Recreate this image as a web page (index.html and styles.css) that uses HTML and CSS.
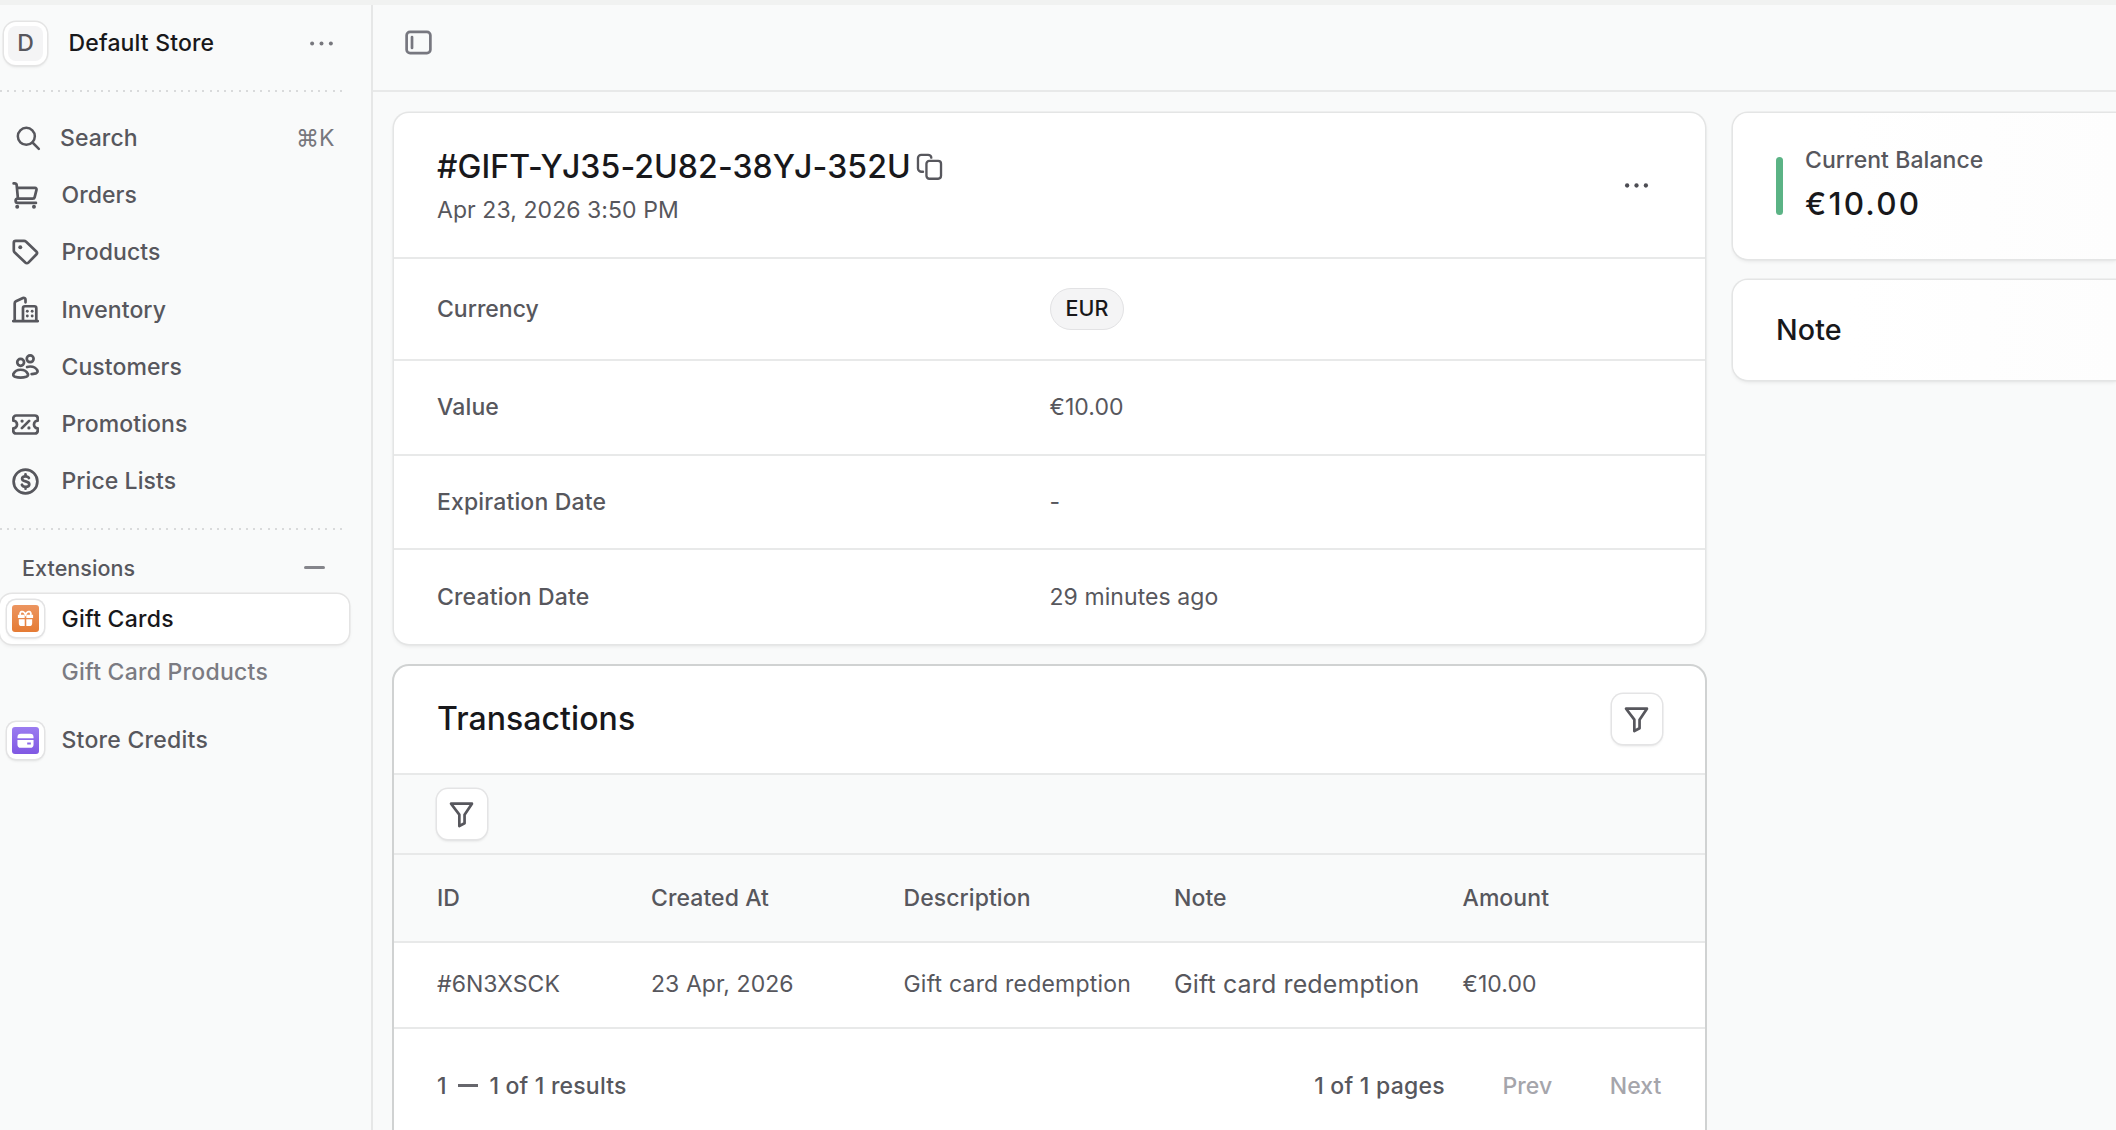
FILE: index.html
```html
<!DOCTYPE html>
<html lang="en">
<head>
  <meta charset="UTF-8" />
  <meta name="viewport" content="width=device-width, initial-scale=1.0"/>
  <title>Gift Cards</title>
  <link rel="stylesheet" href="styles.css">
</head>
<body>
  <div class="topstrip"></div>
  <div class="layout">
    <!-- Sidebar -->
    <aside class="sidebar">
      <div class="store">
        <div class="avatar"><span>D</span></div>
        <span class="store-name">Default Store</span>
        <svg class="dots" viewBox="0 0 15 15"><circle cx="2.3" cy="7.5" r="1.1"/><circle cx="7.5" cy="7.5" r="1.1"/><circle cx="12.7" cy="7.5" r="1.1"/></svg>
      </div>
      <div class="dotted"></div>

      <nav class="nav">
        <a class="nav-item search">
          <svg class="icon" viewBox="0 0 15 15"><circle cx="6.2" cy="6.2" r="5.1"/><path d="M9.9 9.9 13.7 13.7"/></svg>
          <span>Search</span>
          <span class="shortcut">⌘K</span>
        </a>
        <a class="nav-item">
          <svg class="icon" viewBox="0 0 15 15"><path d="M.9 .8h.6c.6 0 1 .4 1.1.9L3.3 9.200M2.900 3.300h9.900c.6 0 1 .5.8 1.100l-1 4c-.1.5-.6.8-1.100.8H3.200a1.200 1.200 0 0 0 0 2.400h10.100"/><circle class="fill" cx="2.9" cy="13.7" r="1.1"/><circle class="fill" cx="12.2" cy="13.7" r="1.1"/></svg>
          <span>Orders</span>
        </a>
        <a class="nav-item">
          <svg class="icon" viewBox="0 0 15 15"><path d="M1 2.1C1 1.5 1.5 1 2.1 1h4.6c.4 0 .7.1 1 .4l5.8 5.5c.5.5.5 1.2 0 1.7l-4.4 4.5c-.5.5-1.2.5-1.7 0L1.4 7.4c-.3-.3-.4-.6-.4-1z"/><circle class="fill" cx="4.6" cy="4.6" r="1.1"/></svg>
          <span>Products</span>
        </a>
        <a class="nav-item">
          <svg class="icon" viewBox="0 0 15 15"><path d="M1.5 14V4c0-.5.3-.9.7-1.1L6.1 1.1c.7-.3 1.4.2 1.4.9V3.5M.7 14h13.6M6.1 14V6.8c0-.6.5-1.1 1.1-1.1h5.200c.6 0 1.100.5 1.100 1.100V14"/><g class="fill"><circle cx="8.5" cy="8.5" r=".8"/><circle cx="11.2" cy="8.5" r=".8"/><circle cx="8.5" cy="11.1" r=".8"/><circle cx="11.2" cy="11.1" r=".8"/></g></svg>
          <span>Inventory</span>
        </a>
        <a class="nav-item">
          <svg class="icon" viewBox="0 0 15 15"><circle cx="4.8" cy="5.2" r="1.9"/><circle cx="10.1" cy="3.2" r="1.9"/><path d="M4.8 9.3c2 0 3.4 1 4 2.3.3.7-.1 1.4-.8 1.6-2 .6-4.4.6-6.4 0-.7-.2-1.1-.9-.8-1.6.6-1.3 2-2.3 4-2.3zM8.4 7.8c.5-.2 1.1-.3 1.7-.3 2 0 3.4 1 4 2.2.3.7-.1 1.4-.8 1.6-.8.2-1.6.4-2.4.4"/></svg>
          <span>Customers</span>
        </a>
        <a class="nav-item">
          <svg class="icon" viewBox="0 0 15 15"><path d="M2.3 2.5h10.4c.9 0 1.6.7 1.6 1.6v1.3a2.1 2.1 0 0 0 0 4.200v1.300c0 .9-.7 1.600-1.600 1.600H2.300c-.9 0-1.600-.7-1.600-1.600V9.600a2.100 2.100 0 0 0 0-4.200V4.100C.7 3.200 1.400 2.500 2.300 2.500zM5.500 9.500l4-4"/><circle class="fill" cx="5.6" cy="5.6" r=".9"/><circle class="fill" cx="9.4" cy="9.4" r=".9"/></svg>
          <span>Promotions</span>
        </a>
        <a class="nav-item">
          <svg class="icon" viewBox="0 0 15 15"><circle cx="7.5" cy="7.5" r="6.6"/><path d="M9.4 5.6C9.1 4.9 8.4 4.6 7.5 4.6c-1.1 0-1.9.5-1.9 1.4 0 2 4 .9 4 3 0 .9-.9 1.5-2 1.5-1 0-1.8-.4-2.1-1.2M7.5 3.5v1.100M7.500 10.500v1"/></svg>
          <span>Price Lists</span>
        </a>
      </nav>
      <div class="dotted"></div>

      <div class="section-label"><span>Extensions</span><i class="minus"></i></div>
      <a class="ext active">
        <span class="app-icon"><span class="tile orange"><svg viewBox="0 0 15 15"><path d="M.8 4.2h6v2.8h-6zM8.2 4.2h6v2.8h-6zM1.6 8.2h5.2v6H4.2a2.6 2.6 0 0 1-2.6-2.6zM8.2 8.2h5.2v3.4a2.6 2.6 0 0 1-2.6 2.6H8.2z"/><path class="bow" d="M2.9 4.4C1.9 1.4 5.6-.3 7.5 4c1.9-4.3 5.6-2.6 4.6.4"/></svg></span></span>
        <span>Gift Cards</span>
      </a>
      <a class="ext sub"><span>Gift Card Products</span></a>
      <a class="ext">
        <span class="app-icon"><span class="tile purple"><svg viewBox="0 0 15 15"><path d="M.4 4.6a3 3 0 0 1 3-3h8.2a3 3 0 0 1 3 3v.9H.4z"/><path fill-rule="evenodd" d="M.4 7h14.2v4a3 3 0 0 1-3 3H3.4a3 3 0 0 1-3-3zM9 9.2v1.8h3.2V9.2z"/></svg></span></span>
        <span>Store Credits</span>
      </a>
    </aside>

    <!-- Page -->
    <div class="page">
      <header class="topbar">
        <svg class="icon" viewBox="0 0 15 15"><rect x=".9" y="1.6" width="13.2" height="11.8" rx="1.9"/><path d="M3.9 4.5v6"/></svg>
      </header>

      <main class="content">
        <div class="col-main">
          <section class="card">
            <div class="card-header">
              <div>
                <div class="title-row">
                  <h1>#GIFT-YJ35-2U82-38YJ-352U</h1>
                  <svg class="icon copy" viewBox="0 0 15 15"><path d="M3.9 10.4h-.8C2.1 10.4 1.1 9.6 1.1 8.6V2.8C1.1 1.8 1.9 1 2.9 1h3.800c1 0 1.800.7 1.800 1.600"/><rect x="5.8" y="4.4" width="8.1" height="9.9" rx="1.6"/></svg>
                </div>
                <p class="date">Apr 23, 2026 3:50 PM</p>
              </div>
              <svg class="dots dark" viewBox="0 0 15 15"><circle cx="2.3" cy="7.5" r="1.2"/><circle cx="7.5" cy="7.5" r="1.2"/><circle cx="12.7" cy="7.5" r="1.2"/></svg>
            </div>
            <div class="row currency"><span class="label">Currency</span><span class="badge">EUR</span></div>
            <div class="row"><span class="label">Value</span><span class="val">€10.00</span></div>
            <div class="row"><span class="label">Expiration Date</span><span class="val">-</span></div>
            <div class="row last"><span class="label">Creation Date</span><span class="val">29 minutes ago</span></div>
          </section>

          <section class="card transactions">
            <div class="table-header">
              <h2>Transactions</h2>
              <button class="filter-btn"><svg class="icon" viewBox="0 0 15 15"><path d="M1.7 1.5h11.6L9.2 7.6v4.8L6.300 13.900V7.600z"/></svg></button>
            </div>
            <div class="filter-bar">
              <button class="filter-btn"><svg class="icon" viewBox="0 0 15 15"><path d="M1.7 1.5h11.6L9.2 7.6v4.8L6.300 13.900V7.600z"/></svg></button>
            </div>
            <div class="tr th"><span>ID</span><span>Created At</span><span>Description</span><span>Note</span><span>Amount</span></div>
            <div class="tr td"><span>#6N3XSCK</span><span>23 Apr, 2026</span><span class="desc">Gift card redemption</span><span class="note">Gift card redemption</span><span>€10.00</span></div>
            <div class="pagination">
              <span class="results">1 <i class="dash"></i> 1 of 1 results</span>
              <span class="pages">1 of 1 pages</span>
              <span class="prev">Prev</span>
              <span class="next">Next</span>
            </div>
          </section>
        </div>

        <div class="col-side">
          <section class="card balance">
            <div class="bar"></div>
            <div class="balance-text">
              <p class="balance-label">Current Balance</p>
              <p class="balance-value">€10.00</p>
            </div>
          </section>
          <section class="card note-card"><h3>Note</h3></section>
        </div>
      </main>
    </div>
  </div>
</body>
</html>
```

FILE: styles.css
```css
* {
  box-sizing: border-box;
}
body {
  margin: 0;
  height: 1130px;
  overflow: hidden;
  font-family: Inter, "Liberation Sans", sans-serif;
  font-size: 23px;
  line-height: 30px;
  font-weight: 500;
  letter-spacing: 0.07px;
  color: #57575d;
  background: #f9fafa;
}
h1, h2, h3, p {
  margin: 0;
  font-weight: 500;
}
.topstrip {
  height: 5px;
  background: #f1f2f1;
}
.layout {
  display: flex;
  height: 1125px;
  overflow: hidden;
}
.icon {
  width: 27px;
  height: 27px;
  flex: none;
  fill: none;
  stroke: #57575d;
  stroke-width: 1.5;
  stroke-linecap: round;
  stroke-linejoin: round;
}
.icon .fill {
  fill: #57575d;
  stroke: none;
}
.dots {
  width: 27px;
  height: 27px;
  fill: #77777d;
}
.dots.dark {
  fill: #4c4c53;
}

/* sidebar */
.sidebar {
  width: 372.5px;
  flex: none;
  border-right: 2px solid #e6e7e7;
}
.store {
  display: flex;
  align-items: center;
  height: 84.5px;
  padding: 0 36px 8px 4px;
}
.avatar {
  width: 43px;
  height: 43px;
  padding: 4px;
  margin-right: 21.5px;
  background: #fff;
  border-radius: 12px;
  box-shadow: 0 0 0 1.5px #e4e4e4, 0 2px 3px rgba(0, 0, 0, 0.1);
}
.avatar span {
  display: block;
  height: 35px;
  line-height: 35px;
  text-align: center;
  background: #f4f4f5;
  border-radius: 8px;
}
.store-name {
  flex: 1;
  letter-spacing: 0.15px;
  color: #18181b;
}
.dotted {
  width: 347px;
  height: 2px;
  background: repeating-linear-gradient(to right, #d9dadb 0 2px, transparent 2px 7.23px);
}
.nav {
  padding: 18px 0 18.3px 12px;
}
.nav-item {
  display: flex;
  align-items: center;
  gap: 22.5px;
  height: 57.2px;
}
.nav-item.search {
  gap: 20px;
  padding-left: 4px;
}
.search .icon {
  width: 25px;
  height: 25px;
}
.search span {
  margin-left: -1px;
}
.search .shortcut {
  margin-left: auto;
  margin-right: 36px;
  font-weight: 400;
  color: #77777d;
}
.section-label {
  display: flex;
  align-items: center;
  justify-content: space-between;
  height: 63.5px;
  padding: 12px 46px 0 22px;
  font-size: 21.5px;
}
.minus {
  width: 21px;
  height: 3px;
  border-radius: 2px;
  background: #85858b;
}
.ext {
  display: flex;
  align-items: center;
  width: 349px;
  height: 50px;
  padding-left: 6.5px;
  letter-spacing: 0.25px;
}
.ext.active {
  color: #18181b;
  background: #fff;
  border-radius: 12px;
  box-shadow: 0 0 0 1.5px #e4e4e4, 0 2px 4px rgba(0, 0, 0, 0.08);
}
.ext.sub {
  height: 56px;
  margin-bottom: 15.5px;
  padding-left: 61.5px;
  color: #7b7b82;
}
.app-icon {
  width: 37px;
  height: 37px;
  padding: 5px;
  margin-right: 18px;
  background: #fff;
  border-radius: 9px;
  box-shadow: 0 0 0 1.5px #e3e3e4, 0 2px 3px rgba(0, 0, 0, 0.1);
}
.tile {
  display: flex;
  align-items: center;
  justify-content: center;
  width: 27px;
  height: 27px;
  border-radius: 3px;
}
.tile svg {
  width: 17px;
  height: 17px;
  fill: #fff;
}
.tile .bow {
  fill: none;
  stroke: #fff;
  stroke-width: 1.6;
}
.orange {
  background: linear-gradient(#ec9560, #e57b34);
}
.purple {
  background: linear-gradient(#9b7cf0, #8058e3);
}

/* page */
.page {
  flex: 1;
  min-width: 0;
}
.topbar {
  display: flex;
  align-items: center;
  height: 87px;
  padding: 0 32.5px 9.5px;
  border-bottom: 2px solid #e8e9e9;
}
.topbar .icon {
  stroke: #77777f;
}
.content {
  display: flex;
  gap: 28px;
  padding: 21px 0 0 21px;
}
.col-main {
  width: 1311px;
  flex: none;
}
.col-side {
  flex: 1;
  overflow: hidden;
  padding: 2px 0 6px 2px;
  margin: -2px 0 0 -2px;
}
.card {
  background: #fff;
  border-radius: 15px;
  box-shadow: 0 0 0 1.5px #e4e5e5, 0 2px 4px rgba(0, 0, 0, 0.1);
}
.card-header {
  display: flex;
  align-items: center;
  justify-content: space-between;
  height: 146px;
  padding: 0 55px 0 43.5px;
  border-bottom: 2px solid #e8e9e9;
}
.title-row {
  display: flex;
  align-items: center;
  gap: 5.5px;
  height: 42px;
}
h1 {
  font-size: 32px;
  letter-spacing: 0.08px;
  color: #18181b;
}
.copy {
  stroke-width: 1.3;
}
.date {
  margin-top: 7px;
  font-weight: 400;
}
.row {
  display: flex;
  align-items: center;
  height: 94.7px;
  padding-left: 43.5px;
  border-bottom: 2px solid #e8e9e9;
}
.row.currency {
  height: 102px;
}
.row.last {
  height: 93.5px;
  border: none;
}
.label {
  width: 612.5px;
  letter-spacing: 0.15px;
}
.row.currency .label {
  letter-spacing: 0;
}
.val {
  font-weight: 400;
}
.badge {
  height: 42px;
  padding: 0 15px;
  line-height: 39px;
  font-size: 21.5px;
  letter-spacing: 0;
  color: #18181b;
  background: #f4f4f5;
  border: 1.5px solid #e2e2e4;
  border-radius: 21px;
}
.transactions {
  height: 520px;
  margin-top: 22px;
  box-shadow: 0 0 0 2px #d0d2d2;
}
.table-header {
  display: flex;
  align-items: center;
  justify-content: space-between;
  height: 109px;
  padding: 0 43px 0 43.5px;
  border-bottom: 2px solid #e8e9e9;
}
h2 {
  font-size: 32px;
  color: #18181b;
}
.filter-btn {
  display: flex;
  align-items: center;
  justify-content: center;
  width: 50px;
  height: 50px;
  padding: 0;
  background: #fff;
  border: none;
  border-radius: 11px;
  box-shadow: 0 0 0 1.5px #e4e4e5, 0 2px 3px rgba(0, 0, 0, 0.12);
}
.filter-bar {
  display: flex;
  align-items: center;
  height: 80.5px;
  padding-left: 43px;
  background: #f9fafa;
  border-bottom: 2px solid #e8e9e9;
}
.tr {
  display: grid;
  grid-template-columns: 214px 252.5px 270.5px 288.5px 1fr;
  align-items: center;
  padding-left: 43.5px;
  border-bottom: 2px solid #e8e9e9;
}
.th {
  height: 88px;
  background: #f9fafa;
}
.td {
  height: 86px;
  padding-bottom: 2px;
  font-weight: 400;
}
.desc {
  letter-spacing: 0.2px;
}
.note {
  font-size: 25px;
  letter-spacing: 0.13px;
}
.pagination {
  display: flex;
  align-items: center;
  height: 113px;
  padding: 0 43px 0 43.5px;
}
.results {
  margin-right: auto;
  letter-spacing: 0.2px;
}
.pages {
  letter-spacing: 0.25px;
}
.dash {
  display: inline-block;
  width: 20px;
  height: 2.5px;
  margin: 0 5px;
  vertical-align: 7px;
  background: #66666c;
}
.prev, .next {
  margin-left: 57.5px;
  color: #a5a5ab;
}
.balance {
  display: flex;
  align-items: center;
  gap: 22px;
  height: 146px;
  padding-left: 43px;
}
.balance, .note-card {
  border-radius: 15px 0 0 15px;
  background: linear-gradient(to right, #fff 30%, #fdfdfd);
}
.bar {
  width: 7.5px;
  height: 58px;
  border-radius: 4px;
  background: #5bb385;
}
.balance-text {
  margin-top: -4px;
}
.balance-value {
  margin-top: 10px;
  font-size: 31.5px;
  line-height: 38px;
  letter-spacing: 2.2px;
  color: #18181b;
}
.note-card {
  display: flex;
  align-items: center;
  height: 100.5px;
  margin-top: 20.5px;
  padding-left: 43.5px;
}
h3 {
  font-size: 28.7px;
  color: #18181b;
}
```
